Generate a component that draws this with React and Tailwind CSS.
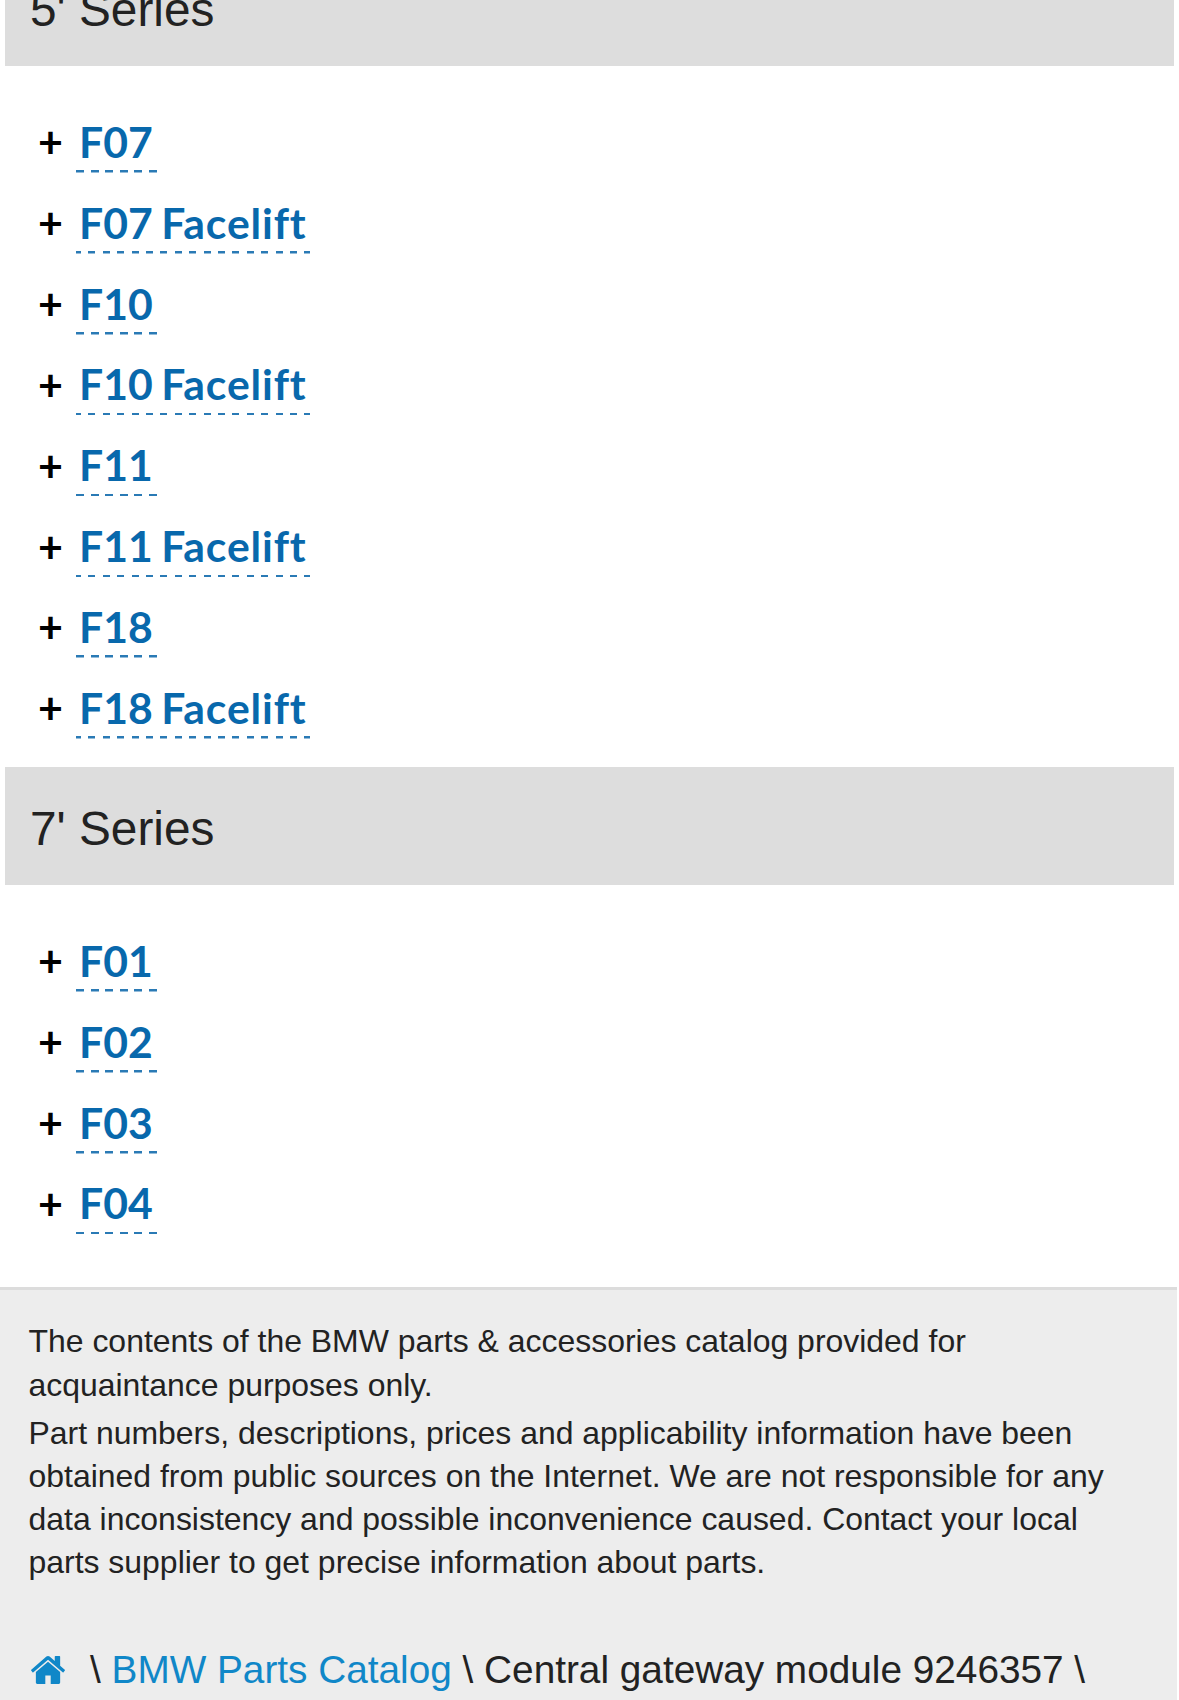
function Series({ title, items, first }) {
  return (
    <section>
      <h2 className={`mx-[5px] flex h-[118.3px] items-center bg-[#dddddd] pt-[5.5px] pl-[25px] text-[47.8px] leading-[60px] text-[#222] ${first ? "-mt-[52.4px]" : ""}`}>
        {title}
      </h2>
      <ul className="pt-[36.5px] pl-[38px]">
        {items.map((name) => {
          const [code, suffix] = name.split(" ");
          return (
            <li key={name} className="flex h-[80.85px] items-center font-['Lato',sans-serif] font-bold">
              <span className="w-[38px] pb-[1px] text-[43px] leading-[50px] text-black">+</span>
              <a
                className={`h-[60px] bg-[length:100%_2.5px] bg-bottom bg-no-repeat pl-[3px] text-[42.7px] leading-[58px] whitespace-pre text-[#0868ac] [font-variant-ligatures:none] ${
                  suffix
                    ? "w-[234px] bg-[repeating-linear-gradient(to_right,#2a7ab5_0_5px,transparent_5px_12.4px,#2a7ab5_12.4px_14.4px)]"
                    : "w-[81px] bg-[repeating-linear-gradient(to_right,#2a7ab5_0_7.9px,transparent_7.9px_14.6px)]"
                }`}
              >
                <span className="tracking-[0.1px]">{code}</span>
                {suffix && <span className="tracking-[0.85px] [word-spacing:-3px]">{" " + suffix}</span>}
              </a>
            </li>
          );
        })}
      </ul>
    </section>
  );
}

function HomeIcon() {
  return (
    <svg viewBox="89 253 1613 1283" preserveAspectRatio="none" className="mr-[25px] h-[28px] w-[34px] fill-[#1087c8]">
      <path d="M1472 992v480q0 26-19 45t-45 19h-384v-384h-256v384h-384q-26 0-45-19t-19-45v-480q0-1 .5-3t.5-3l575-474 575 474q1 2 1 6zm223-69l-62 74q-8 9-21 11h-3q-13 0-21-7l-692-577-692 577q-12 8-24 7-13-2-21-11l-62-74q-8-10-7-23.5t11-21.5l719-599q32-26 76-26t76 26l244 204v-195q0-14 9-23t23-9h192q14 0 23 9t9 23v408l219 182q10 8 11 21.5t-7 23.5z" />
    </svg>
  );
}

export default function App() {
  return (
    <main className="h-[1700px] w-[1179px] overflow-hidden bg-white font-['Liberation_Sans',sans-serif]">
      <Series first title="5' Series" items={["F07", "F07 Facelift", "F10", "F10 Facelift", "F11", "F11 Facelift", "F18", "F18 Facelift"]} />
      <div className="h-[17.5px]" />
      <Series title="7' Series" items={["F01", "F02", "F03", "F04"]} />
      <footer className="mt-[42px] mr-[2px] h-[413px] border-t-[3px] border-[#dcdcdc] bg-[#ededed] pt-[29.5px] pl-[28.5px] text-[31.95px] text-[#222]">
        <p className="leading-[44px] whitespace-nowrap">The contents of the BMW parts &amp; accessories catalog provided for<br />acquaintance purposes only.</p>
        <p className="mt-[4.5px] leading-[43.2px] whitespace-nowrap">Part numbers, descriptions, prices and applicability information have been<br />obtained from public sources on the Internet. We are not responsible for any<br />data inconsistency and possible inconvenience caused. Contact your local<br />parts supplier to get precise information about parts.</p>
        <nav className="mt-[63px] flex items-center pl-[2.5px] text-[38.75px] leading-[44px] whitespace-pre">
          <HomeIcon />
          <span>\ <a className="text-[#1087c8]">BMW Parts Catalog</a> \ Central gateway module 9246357 \</span>
        </nav>
      </footer>
    </main>
  );
}
